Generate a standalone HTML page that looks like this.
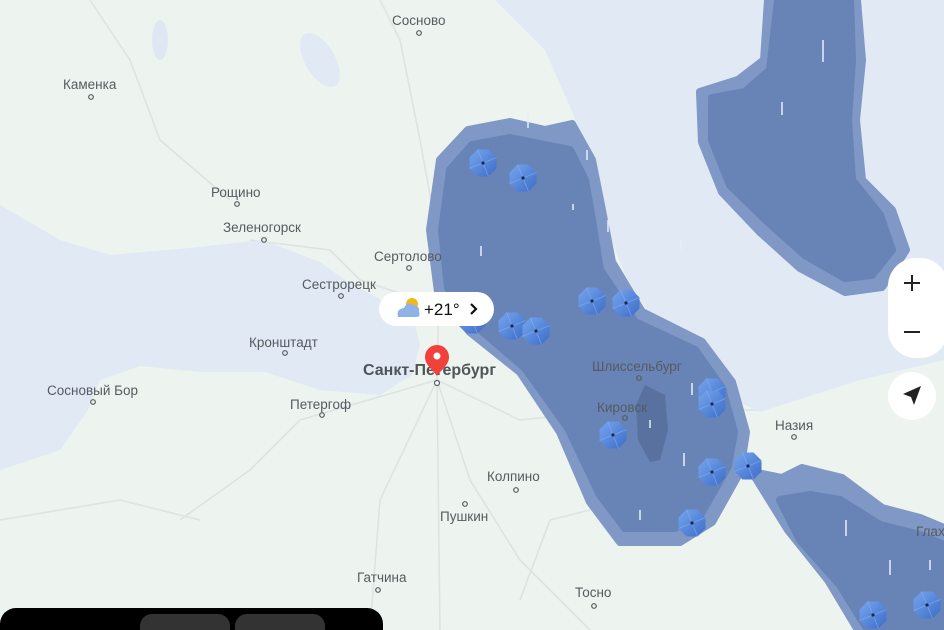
<!DOCTYPE html>
<html><head><meta charset="utf-8"><style>
html,body{margin:0;padding:0;width:944px;height:630px;overflow:hidden;background:#edf3ee}
svg{display:block}
text{font-family:"Liberation Sans",sans-serif;fill:#555b60;font-size:13.5px}
</style></head><body>
<svg width="944" height="630" viewBox="0 0 944 630" xmlns="http://www.w3.org/2000/svg">
<defs>
<linearGradient id="ug" x1="0" y1="0" x2="1" y2="1">
<stop offset="0" stop-color="#76a6ee"/><stop offset="1" stop-color="#3c6cc8"/></linearGradient>
<g id="u">
<polygon points="-5.5,-13.5 5.5,-13.5 13.5,-5.5 13.5,5.5 5.5,13.5 -5.5,13.5 -13.5,5.5 -13.5,-5.5" fill="url(#ug)"/>
<path d="M0 0L-5.5 -13.5M0 0L13.5 -5.5M0 0L5.5 13.5M0 0L-13.5 5.5" stroke="#8fb6f2" stroke-width="0.8" opacity="0.6"/>
<circle r="1.6" fill="#1a2a50"/>
</g>
</defs>
<rect width="944" height="630" fill="#edf3ee"/>
<g fill="none" stroke="#dde2e2" stroke-width="1.5">
<path d="M90 0 L130 60 L160 140 L230 200"/>
<path d="M380 0 L400 40 L420 140 L440 250 L437 380 L440 630"/>
<path d="M600 0 L620 60 L600 100"/>
<path d="M437 380 L520 420 L620 410 L760 410 L944 330"/>
<path d="M437 380 L300 420 L250 470 L180 520"/>
<path d="M437 380 L470 480 L520 560 L590 630"/>
<path d="M437 380 L380 500 L370 630"/>
<path d="M590 510 L550 520 L520 600"/>
<path d="M250 240 L330 250 L360 280 L420 300"/>
<path d="M0 520 L120 500 L200 520"/>
</g>
<g fill="#e1e9f4">
<path d="M0 205 L60 240 L110 255 L190 248 L262 240 L320 262 L345 280 L385 302 L415 325 L420 345 L412 375 L380 395 L320 390 L265 372 L200 372 L140 366 L100 380 L88 410 L60 450 L0 470 Z"/>
<path d="M495 0 L944 0 L944 360 L860 380 L760 412 L735 400 L700 345 L650 315 L625 275 L600 210 L580 130 L545 50 Z"/>
<ellipse cx="160" cy="40" rx="8" ry="20" fill="#dfe7f3"/>
<ellipse cx="320" cy="60" rx="15" ry="30" transform="rotate(-30 320 60)"/>
</g>
<g fill="#7f98c5" stroke="#7f98c5" stroke-width="8" stroke-linejoin="round">
<path d="M440 160 L468 130 L510 122 L545 130 L572 124 L592 160 L602 210 L612 262 L642 312 L702 342 L732 382 L746 432 L740 472 L712 522 L680 542 L620 542 L590 502 L560 432 L520 372 L470 332 L438 292 L430 230 Z"/>
<path d="M768 0 L857 0 L862 60 L856 120 L862 180 L892 210 L906 250 L882 287 L845 292 L800 268 L760 232 L722 192 L702 142 L700 92 L738 80 L764 60 Z"/>
<path d="M752 472 L782 478 L802 468 L842 478 L882 508 L920 518 L944 528 L944 630 L858 630 L828 580 L788 530 Z"/>
</g>
<g fill="#6883b6" stroke="#6883b6" stroke-width="8" stroke-linejoin="round">
<path d="M450 170 L472 145 L510 138 L545 145 L570 150 L585 180 L592 220 L600 270 L635 322 L695 350 L722 388 L734 432 L728 466 L702 512 L675 528 L625 528 L600 495 L568 428 L525 368 L475 325 L448 288 L442 230 Z"/>
<path d="M778 0 L850 0 L852 60 L848 120 L852 180 L880 215 L892 250 L872 275 L845 278 L805 255 L768 222 L730 185 L712 140 L712 98 L745 92 L770 70 Z"/>
<path d="M780 500 L810 495 L840 500 L880 525 L920 535 L944 545 L944 630 L868 630 L840 585 L800 540 Z"/>
</g>
<path d="M645 385 L665 395 L668 430 L660 460 L650 462 L638 440 L636 405 Z" fill="#58719f"/>
<g stroke="#e6eef9" stroke-width="1.5">
<path d="M528 110 V128M587 150 V160M481 246 V256M573 204 V210M608 220 V232M681 240 V250M823 40 V62M782 102 V115M692 383 V395M650 420 V428M684 453 V466M640 510 V520M846 520 V536M890 560 V575M930 560 V570M746 455 V465"/>
</g>
<g>
<text x="392" y="25">Сосново</text><circle cx="419" cy="33" r="2.3" fill="none" stroke="#555b60" stroke-width="1.2"/>
<text x="63" y="89">Каменка</text><circle cx="91" cy="97" r="2.3" fill="none" stroke="#555b60" stroke-width="1.2"/>
<text x="211" y="197">Рощино</text><circle cx="237" cy="204" r="2.3" fill="none" stroke="#555b60" stroke-width="1.2"/>
<text x="223" y="232">Зеленогорск</text><circle cx="264" cy="240" r="2.3" fill="none" stroke="#555b60" stroke-width="1.2"/>
<text x="374" y="261">Сертолово</text><circle cx="409" cy="268" r="2.3" fill="none" stroke="#555b60" stroke-width="1.2"/>
<text x="302" y="289">Сестрорецк</text><circle cx="341" cy="296" r="2.3" fill="none" stroke="#555b60" stroke-width="1.2"/>
<text x="249" y="347">Кронштадт</text><circle cx="285" cy="353" r="2.3" fill="none" stroke="#555b60" stroke-width="1.2"/>
<text x="47" y="395">Сосновый Бор</text><circle cx="93" cy="402" r="2.3" fill="none" stroke="#555b60" stroke-width="1.2"/>
<text x="290" y="409">Петергоф</text><circle cx="322" cy="415" r="2.3" fill="none" stroke="#555b60" stroke-width="1.2"/>
<text x="363" y="375" style="font-size:16px;font-weight:bold;fill:#4f5458">Санкт-Петербург</text>
<circle cx="437" cy="383" r="2.5" fill="#fff" stroke="#555b60" stroke-width="1.2"/>
<text x="592" y="371">Шлиссельбург</text><circle cx="639" cy="378" r="2.3" fill="none" stroke="#555b60" stroke-width="1.2"/>
<text x="597" y="412">Кировск</text><circle cx="625" cy="418" r="2.3" fill="none" stroke="#555b60" stroke-width="1.2"/>
<text x="775" y="430">Назия</text><circle cx="794" cy="437" r="2.3" fill="none" stroke="#555b60" stroke-width="1.2"/>
<text x="487" y="481">Колпино</text><circle cx="516" cy="490" r="2.3" fill="none" stroke="#555b60" stroke-width="1.2"/>
<text x="440" y="521">Пушкин</text><circle cx="465" cy="504" r="2.3" fill="none" stroke="#555b60" stroke-width="1.2"/>
<text x="357" y="582">Гатчина</text><circle cx="378" cy="590" r="2.3" fill="none" stroke="#555b60" stroke-width="1.2"/>
<text x="575" y="597">Тосно</text><circle cx="594" cy="606" r="2.3" fill="none" stroke="#555b60" stroke-width="1.2"/>
<text x="916" y="536">Глах</text>
</g>
<use href="#u" x="472" y="320"/>
<use href="#u" x="483" y="163"/><use href="#u" x="523" y="178"/>
<use href="#u" x="592" y="301"/><use href="#u" x="626" y="303"/>
<use href="#u" x="512" y="326"/><use href="#u" x="536" y="331"/>
<use href="#u" x="712" y="392"/><use href="#u" x="712" y="404"/>
<use href="#u" x="613" y="435"/><use href="#u" x="712" y="472"/>
<use href="#u" x="748" y="466"/><use href="#u" x="692" y="523"/>
<use href="#u" x="873" y="615"/><use href="#u" x="927" y="605"/>
<rect x="379" y="292" width="115" height="34" rx="17" fill="#fff"/>
<circle cx="412" cy="304" r="6" fill="#f2b81b"/>
<path d="M398 317 Q396 309 404 308 Q407 301 414 305 Q420 306 419 312 Q421 317 416 317 Z" fill="#8fb3e6"/>
<text x="424" y="315" style="font-size:17px;fill:#111">+21°</text>
<path d="M471 304 L476 309 L471 314" fill="none" stroke="#111" stroke-width="2.2"/>
<path d="M437 376 C433 370 425 365 425 357 A12 12 0 0 1 449 357 C449 365 441 370 437 376 Z" fill="#f0413a"/>
<circle cx="437" cy="356" r="3.5" fill="#fff"/>
<rect x="888" y="258" width="60" height="100" rx="28" fill="#fff"/>
<path d="M904 283 H920 M912 275 V291 M904 332 H920" stroke="#222" stroke-width="2"/>
<circle cx="912" cy="396" r="24" fill="#fff"/>
<path d="M921 386 L903 394 L911 397 L914 405 Z" fill="#222"/>
<rect x="0" y="608" width="383" height="40" rx="16" fill="#000"/>
<rect x="140" y="614" width="90" height="30" rx="12" fill="#333"/>
<rect x="235" y="614" width="90" height="30" rx="12" fill="#333"/>
</svg>
</body></html>
